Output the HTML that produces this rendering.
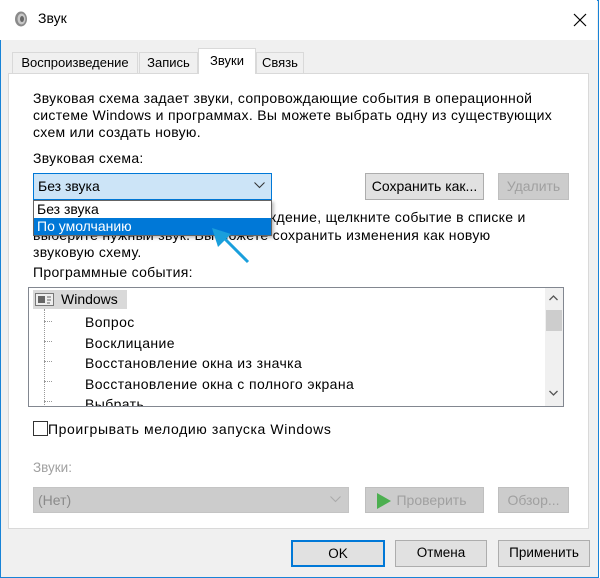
<!DOCTYPE html>
<html><head><meta charset="utf-8"><style>
*{box-sizing:border-box;margin:0;padding:0}
body{width:600px;height:578px;overflow:hidden;background:#fff;font-family:"Liberation Sans",sans-serif;font-size:12.5px;color:#000;position:relative}
.a{position:absolute;white-space:nowrap}
.win{position:absolute;left:0;top:0;width:599px;height:578px;border:1px solid #1883d7;background:#f0f0f0}
.title{position:absolute;left:0;top:0;width:597px;height:40px;background:#fff}
.tab{position:absolute;background:#f0f0f0;border:1px solid #d9d9d9;border-bottom:none;text-align:center;line-height:20px;font-size:13px}
.panel{position:absolute;left:8px;top:73px;width:581px;height:456px;background:#fff;border:1px solid #d9d9d9}
.btn{position:absolute;background:#e1e1e1;border:1px solid #adadad;text-align:center;line-height:24px;font-size:13.5px}
.dis{color:#a0a0a0;background:#cccccc;border-color:#bfbfbf}
.p{font-size:14px;letter-spacing:0.3px}
</style></head><body>
<div class="win"></div>
<div class="title"></div>
<svg class="a" style="left:13px;top:10px" width="16" height="18" viewBox="0 0 16 18"><ellipse cx="8" cy="9" rx="6" ry="7.5" fill="#8a8a8a"/><ellipse cx="8.5" cy="9" rx="4" ry="5.5" fill="#c8c8c8"/><ellipse cx="9" cy="9" rx="2" ry="3" fill="#666"/></svg>
<div class="a" style="left:38px;top:10px;font-size:14px">Звук</div>
<svg class="a" style="left:573px;top:13px" width="14" height="14"><path d="M1 1L13 13M13 1L1 13" stroke="#000" stroke-width="1.2"/></svg>
<div class="panel"></div>
<div class="tab" style="left:12px;top:52px;width:126px;height:21px">Воспроизведение</div>
<div class="tab" style="left:139px;top:52px;width:59px;height:21px">Запись</div>
<div class="tab" style="left:256px;top:52px;width:48px;height:21px">Связь</div>
<div class="tab" style="left:198px;top:48px;width:58px;height:26px;background:#fff;line-height:24px">Звуки</div>
<div class="a p" style="left:33px;top:90px;line-height:17px">Звуковая схема задает звуки, сопровождающие события в операционной<br>системе Windows и программах. Вы можете выбрать одну из существующих<br>схем или создать новую.</div>
<div class="a p" style="left:33px;top:150px">Звуковая схема:</div>
<div class="a p" style="left:33px;top:209px;line-height:17.5px">Чтобы изменить звуковое сопровождение, щелкните событие в списке и<br>выберите нужный звук. Вы можете сохранить изменения как новую<br>звуковую схему.</div>
<div class="a" style="left:33px;top:173px;width:239px;height:27px;background:#cce4f7;border:1px solid #0078d7;line-height:24px;padding-left:4px;font-size:14px">Без звука</div>
<svg class="a" style="left:254px;top:182px" width="11" height="7"><path d="M0.5 0.5L5.5 5.5L10.5 0.5" stroke="#333" fill="none"/></svg>
<div class="a" style="left:33px;top:200px;width:239px;height:36px;background:#fff;border:1px solid #646464;box-shadow:2px 2px 3px rgba(0,0,0,.25)"></div>
<div class="a" style="left:37px;top:201px;font-size:14px">Без звука</div>
<div class="a" style="left:34px;top:218px;width:237px;height:17px;background:#0078d7;color:#fff;padding-left:3px;line-height:16px;font-size:14px">По умолчанию</div>
<svg class="a" style="left:205px;top:220px" width="50" height="50"><path d="M43 42L17 16" stroke="#1a9fdc" stroke-width="3"/><path d="M7 8L26 14L13 27Z" fill="#1a9fdc"/></svg>
<div class="btn" style="left:365px;top:173px;width:119px;height:27px;font-size:14px">Сохранить как...</div>
<div class="btn dis" style="left:498px;top:173px;width:71px;height:27px;font-size:14px">Удалить</div>
<div class="a p" style="left:33px;top:264px">Программные события:</div>
<div class="a" style="left:28px;top:287px;width:536px;height:120px;border:1px solid #828790;background:#fff;overflow:hidden">
<div class="a" style="left:4px;top:2px;width:94px;height:19px;background:#d9d9d9"></div>
<svg class="a" style="left:6px;top:5px" width="20" height="14"><rect x="0.5" y="0.5" width="18" height="12" fill="#eee" stroke="#777"/><rect x="3" y="3" width="7" height="7" fill="#666"/><path d="M12 4h4M12 7h4M12 10h3" stroke="#666"/></svg>
<div class="a" style="left:32px;top:3px;font-size:14px">Windows</div>
<div class="a" style="left:15px;top:21px;height:100px;border-left:1px dotted #999"></div>
<div class="a" style="left:15px;top:33px;width:8px;border-top:1px dotted #999"></div>
<div class="a" style="left:15px;top:53px;width:8px;border-top:1px dotted #999"></div>
<div class="a" style="left:15px;top:73px;width:8px;border-top:1px dotted #999"></div>
<div class="a" style="left:15px;top:93px;width:8px;border-top:1px dotted #999"></div>
<div class="a" style="left:15px;top:113px;width:8px;border-top:1px dotted #999"></div>
<div class="a" style="left:56px;top:24px;font-size:14px;letter-spacing:0.4px;line-height:20.5px">Вопрос<br>Восклицание<br>Восстановление окна из значка<br>Восстановление окна с полного экрана<br>Выбрать</div>
<div class="a" style="left:516px;top:0;width:18px;height:118px;background:#f0f0f0"></div>
<div class="a" style="left:517px;top:22px;width:16px;height:21px;background:#cdcdcd"></div>
<svg class="a" style="left:520px;top:7px" width="9" height="6"><path d="M0.5 5L4.5 1L8.5 5" stroke="#555" fill="none" stroke-width="1.3"/></svg>
<svg class="a" style="left:520px;top:102px" width="9" height="6"><path d="M0.5 1L4.5 5L8.5 1" stroke="#555" fill="none" stroke-width="1.3"/></svg>
</div>
<div class="a" style="left:33px;top:421px;width:15px;height:15px;border:1px solid #333;background:#fff"></div>
<div class="a" style="left:48px;top:421px;font-size:14px;letter-spacing:0.6px">Проигрывать мелодию запуска Windows</div>
<div class="a" style="left:33px;top:460px;color:#a0a0a0;font-size:13.5px">Звуки:</div>
<div class="a" style="left:33px;top:487px;width:316px;height:26px;background:#cccccc;border:1px solid #c4c4c4;color:#8a8a8a;line-height:24px;padding-left:4px;font-size:14px">(Нет)</div>
<svg class="a" style="left:330px;top:496px" width="11" height="7"><path d="M0.5 0.5L5.5 5.5L10.5 0.5" stroke="#aaa" fill="none"/></svg>
<div class="btn dis" style="left:365px;top:487px;width:119px;height:26px;padding-left:14px;font-size:14px">Проверить</div>
<svg class="a" style="left:377px;top:493px" width="14" height="16"><path d="M0 0L14 8L0 16Z" fill="#4caf50"/></svg>
<div class="btn dis" style="left:498px;top:487px;width:71px;height:26px;font-size:14px">Обзор...</div>
<div class="btn" style="left:291px;top:540px;width:94px;height:27px;border:2px solid #0078d7;line-height:23px">OK</div>
<div class="btn" style="left:395px;top:540px;width:92px;height:27px">Отмена</div>
<div class="btn" style="left:498px;top:540px;width:92px;height:27px">Применить</div>
</body></html>
